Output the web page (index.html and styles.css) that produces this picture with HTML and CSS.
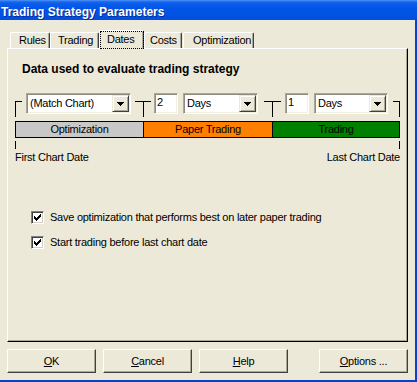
FILE: index.html
```html
<!DOCTYPE html>
<html lang="en">
<head>
<meta charset="utf-8">
<title>Trading Strategy Parameters</title>
<link rel="stylesheet" href="styles.css">
</head>
<body>
<div class="window">
  <div class="titlebar"><span class="title">Trading Strategy Parameters</span></div>
  <div class="frame">
    <div class="tabs">
      <div class="tab tab-rules">Rules</div>
      <div class="tab tab-trading">Trading</div>
      <div class="tab tab-dates tab-selected">Dates</div>
      <div class="tab tab-costs">Costs</div>
      <div class="tab tab-opt">Optimization</div>
    </div>
    <div class="panel">
      <div class="heading">Data used to evaluate trading strategy</div>
      <div class="controls">
        <div class="conn bracket-l"></div>
        <div class="combo combo-chart"><span class="combo-text">(Match Chart)</span><span class="drop"><svg width="7" height="4" viewBox="0 0 7 4"><path d="M0 0h7v1h-1v1h-1v1h-1v1h-1v-1h-1v-1h-1v-1h-1z" fill="#000"/></svg></span></div>
        <div class="conn tee tee-1"></div>
        <div class="edit edit-1">2</div>
        <div class="combo combo-days1"><span class="combo-text">Days</span><span class="drop"><svg width="7" height="4" viewBox="0 0 7 4"><path d="M0 0h7v1h-1v1h-1v1h-1v1h-1v-1h-1v-1h-1v-1h-1z" fill="#000"/></svg></span></div>
        <div class="conn tee tee-2"></div>
        <div class="edit edit-2">1</div>
        <div class="combo combo-days2"><span class="combo-text">Days</span><span class="drop"><svg width="7" height="4" viewBox="0 0 7 4"><path d="M0 0h7v1h-1v1h-1v1h-1v1h-1v-1h-1v-1h-1v-1h-1z" fill="#000"/></svg></span></div>
        <div class="conn bracket-r"></div>
      </div>
      <div class="bar">
        <div class="seg seg-opt">Optimization</div>
        <div class="seg seg-paper">Paper Trading</div>
        <div class="seg seg-trade">Trading</div>
      </div>
      <div class="ticks"></div>
      <div class="ends"><span>First Chart Date</span><span>Last Chart Date</span></div>
      <div class="options">
        <label class="check"><span class="box"><svg width="7" height="7" viewBox="0 0 7 7"><path d="M0 2h1v3h-1zM1 3h1v3h-1zM2 4h1v3h-1zM3 3h1v3h-1zM4 2h1v3h-1zM5 1h1v3h-1zM6 0h1v3h-1z" fill="#000"/></svg></span>Save optimization that performs best on later paper trading</label>
        <label class="check"><span class="box"><svg width="7" height="7" viewBox="0 0 7 7"><path d="M0 2h1v3h-1zM1 3h1v3h-1zM2 4h1v3h-1zM3 3h1v3h-1zM4 2h1v3h-1zM5 1h1v3h-1zM6 0h1v3h-1z" fill="#000"/></svg></span>Start trading before last chart date</label>
      </div>
    </div>
    <div class="buttons">
      <button class="btn"><u>O</u>K</button>
      <button class="btn btn-gap"><u>C</u>ancel</button>
      <button class="btn btn-gap"><u>H</u>elp</button>
      <button class="btn btn-far"><u>O</u>ptions ...</button>
    </div>
  </div>
</div>
</body>
</html>
```
FILE: styles.css
```css
* { box-sizing: border-box; }
html, body { margin: 0; padding: 0; }
body {
  width: 417px;
  height: 382px;
  overflow: hidden;
  background: #ece9d8;
  font-family: "Liberation Sans", Arial, sans-serif;
  font-size: 11px;
  letter-spacing: -0.25px;
  color: #000;
}
.window {
  width: 417px;
  height: 382px;
  display: flex;
  flex-direction: column;
  background: #ece9d8;
}
.titlebar {
  height: 20px;
  flex: none;
  background: linear-gradient(#5b9df9 0, #2a74f2 1px, #0c5eec 3px, #0056e6 8px, #0053e3 14px, #0050dc 20px);
  padding: 4px 0 0 1px;
}
.title {
  display: block;
  color: #fff;
  font-weight: bold;
  font-size: 12px;
  line-height: 16px;
  letter-spacing: 0;
  text-shadow: 1px 1px 0 #0a2a9a;
  white-space: nowrap;
}
.frame {
  flex: 1;
  display: flex;
  flex-direction: column;
  padding-left: 7px;
  border-right: 2px solid #0842c9;
  border-bottom: 2px solid #0842c9;
}
.tabs {
  display: flex;
  height: 18px;
  margin: 10px 0 0 3px;
  position: relative;
  z-index: 1;
  align-items: flex-start;
}
.tab {
  position: relative;
  margin-top: 2px;
  height: 16px;
  border-top: 1px solid #fff;
  border-left: 1px solid #fff;
  border-right: 1px solid #404040;
  box-shadow: inset -1px 0 0 #aca899;
  border-radius: 2px 2px 0 0;
  padding-top: 1px;
  line-height: 13px;
  white-space: nowrap;
}
.tab-rules { width: 40px; padding-left: 8px; }
.tab-trading { width: 49px; padding-left: 7px; }
.tab-dates { width: 45px; padding-left: 7px; }
.tab-costs { width: 38px; padding-left: 5px; }
.tab-opt { width: 71px; padding-left: 9px; margin-left: 1px; }
.tab-selected {
  margin-top: 0;
  height: 19px;
  margin-bottom: -1px;
  background: #ece9d8;
  padding-top: 2px;
}
.tab-selected::after {
  content: "";
  position: absolute;
  left: 0;
  top: 0;
  width: 42px;
  height: 16px;
  border: 1px dotted #000;
}
.panel {
  width: 401px;
  height: 294px;
  flex: none;
  border-top: 1px solid #fff;
  border-left: 1px solid #fff;
  border-right: 1px solid #000;
  border-bottom: 1px solid #000;
  box-shadow: inset -1px -1px 0 #aca899;
  padding-left: 7px;
}
.heading {
  margin: 13px 0 0 7px;
  font-size: 12px;
  font-weight: bold;
  line-height: 14px;
  letter-spacing: 0;
}
.controls {
  display: flex;
  align-items: flex-start;
  height: 21px;
  margin-top: 17px;
}
.conn {
  margin-top: 8px;
  height: 16px;
  border-top: 1px solid #000;
}
.bracket-l { width: 7px; border-left: 1px solid #000; }
.bracket-r { width: 7px; border-right: 1px solid #000; margin-left: 5px; }
.tee { background: linear-gradient(#000, #000) no-repeat 8px 0 / 1px 100%; }
.tee-1 { width: 16px; margin-left: 4px; }
.tee-2 { width: 17px; margin-left: 6px; }
.combo {
  display: flex;
  height: 21px;
  background: #fff;
  border: 1px solid;
  border-color: #aca899 #fff #fff #aca899;
  box-shadow: inset 1px 1px 0 #8e8c80, inset -1px -1px 0 #f1efe2;
  padding: 1px;
}
.combo-chart { width: 105px; margin-left: 4px; }
.combo-days1 { width: 75px; margin-left: 5px; }
.combo-days2 { width: 74px; margin-left: 5px; }
.combo-text {
  flex: 1;
  padding-left: 2px;
  line-height: 17px;
  white-space: nowrap;
  overflow: hidden;
}
.drop {
  width: 17px;
  height: 17px;
  flex: none;
  display: flex;
  align-items: center;
  justify-content: center;
  background: #ece9d8;
  border: 1px solid;
  border-color: #ece9d8 #404040 #404040 #ece9d8;
  box-shadow: inset 1px 1px 0 #fff, inset -1px -1px 0 #aca899;
}
.drop svg { display: block; }
.edit {
  width: 24px;
  height: 21px;
  background: #fff;
  border: 1px solid;
  border-color: #aca899 #fff #fff #aca899;
  box-shadow: inset 1px 1px 0 #8e8c80, inset -1px -1px 0 #f1efe2;
  padding: 2px 0 0 2px;
  line-height: 13px;
}
.edit-1 { margin-left: 3px; }
.edit-2 { margin-left: 4px; }
.bar {
  display: flex;
  width: 385px;
  height: 17px;
  margin-top: 7px;
  border: 1px solid #000;
  line-height: 15px;
  text-align: center;
}
.seg { white-space: nowrap; }
.seg-opt { width: 127px; background: #c8c8c8; }
.seg-paper { width: 129px; background: #ff8000; border-left: 1px solid #000; }
.seg-trade { width: 127px; background: #008000; border-left: 1px solid #000; }
.ticks {
  width: 385px;
  height: 8px;
  margin-top: 3px;
  border-left: 1px solid #000;
  border-right: 1px solid #000;
}
.ends {
  width: 385px;
  display: flex;
  justify-content: space-between;
  margin-top: 2px;
  line-height: 13px;
}
.options {
  display: flex;
  flex-direction: column;
  gap: 12px;
  margin: 47px 0 0 16px;
}
.check {
  display: flex;
  align-items: center;
  height: 13px;
  line-height: 13px;
  white-space: nowrap;
}
.box {
  width: 13px;
  height: 13px;
  flex: none;
  margin-right: 6px;
  display: flex;
  align-items: center;
  justify-content: center;
  background: #fff;
  border: 1px solid;
  border-color: #808080 #fff #fff #808080;
  box-shadow: inset 1px 1px 0 #404040, inset -1px -1px 0 #d4d0c8;
}
.box svg { display: block; }
.buttons {
  display: flex;
  height: 24px;
  margin-top: 7px;
}
.btn {
  width: 89px;
  height: 24px;
  padding: 0;
  margin: 0;
  font: inherit;
  letter-spacing: inherit;
  color: #000;
  line-height: 22px;
  text-align: center;
  background: #ece9d8;
  border: 1px solid;
  border-color: #fff #404040 #404040 #fff;
  box-shadow: inset -1px -1px 0 #aca899;
  border-radius: 0;
}
.btn-gap { margin-left: 7px; }
.btn-far { margin-left: 31px; }
```
